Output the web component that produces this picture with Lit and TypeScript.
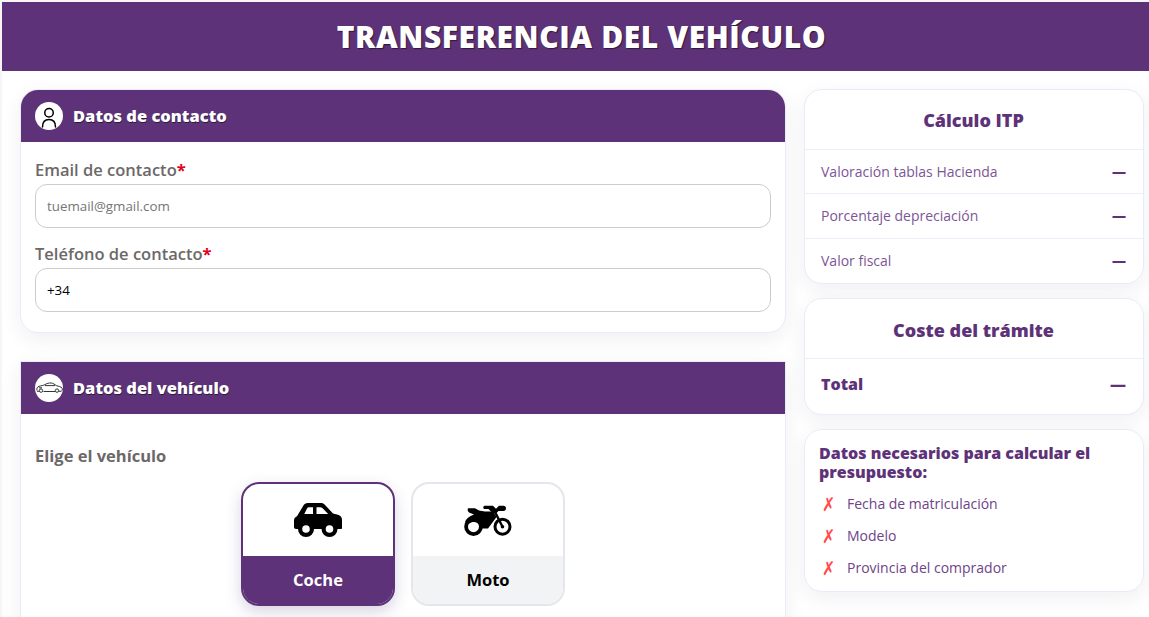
import { LitElement, html, css, svg } from 'lit';
import { customElement } from 'lit/decorators.js';

const personIcon = svg`<svg width="16" height="24" viewBox="0 0 16 24" fill="none" stroke="#000" stroke-width="1.5" stroke-linecap="round">
  <circle cx="8" cy="8.700" r="4.250"></circle>
  <path d="M1.500 23c0-4.800 2.500-7.400 6.500-7.400s6.500 2.600 6.500 7.400"></path>
</svg>`;

const sportsCarIcon = svg`<svg width="27" height="12" viewBox="0 0 27 12" fill="none" stroke="#000" stroke-width="0.8">
  <path d="M1 8.500c-.6-2 .2-3.600 2-4.200 2.500-.7 4.500-.8 6-1.700C10.800 1.400 13 .8 15.200 1c2 .2 3.700 1.700 5.400 2.700 2 .6 4.400 1 5.400 2.300.5 1 .4 2-.2 2.800"></path>
  <path d="M7.500 9.500h11.500M1 9.300h2M23 9.300h2.500M3 5.800h3M9 3.600h10"></path>
  <circle cx="5" cy="8.600" r="1.700"></circle>
  <circle cx="21" cy="8.600" r="1.700"></circle>
</svg>`;

const carIcon = svg`<svg width="48" height="34" viewBox="0 0 48 34">
  <path fill="#000" fill-rule="evenodd" d="M14 0h13c1.500 0 2.800.6 3.800 1.700L39 10.500l5 1.300c2.300.6 4 2.600 4 5v8.200c0 .6-.4 1-1 1H2c-1.100 0-2-.9-2-2v-6.500c0-2 1.200-3.700 3-4.300L9 3.200C10 1.200 11.800 0 14 0zM15 4.200c-.9 0-1.600.4-2 1.200l-2.700 5.600h8.700V4.200h-4zM22.500 4.200V11h11.700l-5.600-5.800c-.7-.7-1.500-1-2.400-1h-3.700z"></path>
  <circle cx="12" cy="26" r="8" fill="#000"></circle>
  <circle cx="12" cy="26" r="3.800" fill="#fff"></circle>
  <circle cx="35.500" cy="26" r="8" fill="#000"></circle>
  <circle cx="35.500" cy="26" r="3.800" fill="#fff"></circle>
</svg>`;

const motoIcon = svg`<svg width="48" height="31" viewBox="0 0 48 31">
  <circle cx="9.500" cy="21.700" r="7.400" fill="none" stroke="#000" stroke-width="3.800"></circle>
  <circle cx="38.500" cy="21.700" r="7.500" fill="none" stroke="#000" stroke-width="3"></circle>
  <circle cx="38.500" cy="21.700" r="1.800" fill="#000"></circle>
  <path fill="#000" d="M4 3.300H11l4 2.200 6 1h8l3.500 5.500L24 23.500h-7.500c-.5-3.500-2.500-6.500-6.500-6.500-2 0-3.500.6-5 1.800L1 17c1-3 4-6 9-7.500L5 7.500C3.800 6.500 3.200 5 4 3.300z"></path>
  <path fill="#000" d="M21 .8h8l3 3 3-3h4.500c1.500 0 2.500 1.100 2.500 2.500S41 6 39.500 6h-5l-2.500 2.500h-3L24.500 4H21c-1 0-1.700-.7-1.700-1.600S20 .8 21 .8z"></path>
  <path fill="none" stroke="#000" stroke-width="2.400" stroke-linecap="round" d="M30 5l8.500 16.700"></path>
</svg>`;

@customElement('app-root')
export class AppRoot extends LitElement {
  static styles = css`
    :host {
      display: block;
      height: 617px;
      overflow: hidden;
      box-sizing: border-box;
      padding: 2px 0 0 2px;
      background: #f6f6f6;
      font-family: 'Open Sans', sans-serif;
    }
    .page {
      background: #fff;
      height: 100%;
    }
    .banner {
      height: 69px;
      display: flex;
      align-items: center;
      justify-content: center;
      padding-left: 12px;
      background: #5e3278;
    }
    .banner h1 {
      margin: 0;
      font-size: 30px;
      font-weight: 800;
      letter-spacing: 0.6px;
      color: #fff;
      text-shadow: 1px 1px 1px #2c1a3a;
    }
    .layout {
      display: grid;
      grid-template-columns: 766px 340px;
      gap: 18px;
      padding: 18px 0 0 18px;
    }
    .main, .side {
      display: flex;
      flex-direction: column;
    }
    .main { gap: 28px; }
    .side { gap: 14px; }
    .card {
      background: #fff;
      border: 1px solid #e9ecf8;
      box-shadow: 0 6px 20px rgba(40, 30, 70, 0.07);
    }
    .form-card { border-radius: 18px; }
    .form-card.square { border-radius: 0; padding-bottom: 40px; }
    .section-head {
      height: 52px;
      display: flex;
      align-items: center;
      gap: 10px;
      padding-left: 14px;
      background: #5e3278;
      color: #fff;
      font-size: 16.5px;
      font-weight: 800;
      text-shadow: 0.5px 0.5px 0 #2c1a3a;
    }
    .section-head span:last-child { margin-top: -2px; }
    .form-card:not(.square) .section-head {
      border-radius: 17px 17px 0 0;
    }
    .round {
      width: 28px;
      height: 28px;
      border-radius: 50%;
      background: #fff;
      display: flex;
      align-items: center;
      justify-content: center;
    }
    .fields {
      display: flex;
      flex-direction: column;
      gap: 14px;
      padding: 16px 14px 20px;
    }
    label, .pick-label {
      display: block;
      font-size: 16.5px;
      font-weight: 600;
      line-height: 24px;
      color: #6c6868;
    }
    label b {
      color: #e2001a;
      font-weight: 700;
    }
    input {
      display: block;
      box-sizing: border-box;
      width: 100%;
      height: 44px;
      margin-top: 2px;
      padding: 0 11px;
      border: 1px solid #ccc;
      border-radius: 12px;
      background: #fff;
      font: 400 13.33px 'Open Sans', sans-serif;
      color: #000;
      outline: none;
    }
    input::placeholder { color: #757575; opacity: 1; }
    .pick {
      padding: 30px 14px 0;
    }
    .pick-label { font-weight: 700; }
    .tiles {
      display: flex;
      justify-content: center;
      gap: 16px;
      margin-top: 14px;
    }
    .tile {
      box-sizing: border-box;
      width: 154px;
      height: 124px;
      display: flex;
      flex-direction: column;
      border: 2px solid #e5e6eb;
      border-radius: 18px;
      overflow: hidden;
      background: #fff;
    }
    .tile .pic {
      flex: 1;
      display: flex;
      align-items: center;
      justify-content: center;
    }
    .tile .name {
      height: 48px;
      box-sizing: border-box;
      padding-bottom: 2px;
      display: flex;
      align-items: center;
      justify-content: center;
      background: #f2f3f5;
      font-size: 16.5px;
      font-weight: 700;
      color: #000;
    }
    .tile.active {
      border-color: #5e3278;
      box-shadow: 0 6px 16px rgba(60, 40, 110, 0.2);
    }
    .tile.active .name {
      background: #5e3278;
      color: #fff;
    }
    .side-card { border-radius: 18px; }
    .side-title {
      height: 59px;
      box-sizing: border-box;
      display: flex;
      align-items: center;
      justify-content: center;
      padding-right: 1px;
      font-size: 18px;
      font-weight: 800;
      color: #5e3278;
    }
    .side-title.low { padding-top: 2px; }
    .row {
      height: 45px;
      display: flex;
      align-items: center;
      justify-content: space-between;
      box-sizing: border-box;
      padding: 0 17px 1px 16px;
      border-top: 1px solid #ecedf9;
      font-size: 14px;
      color: #7d5596;
    }
    .side-title + .row { height: 44px; padding-bottom: 0; }
    .row span:last-child {
      font-size: 14px;
      font-weight: 800;
      color: #5e3278;
    }
    .side-title + .row.total {
      height: 56px;
      padding-bottom: 5px;
      font-size: 16px;
      font-weight: 800;
      color: #5e3278;
    }
    .row.total span:last-child { font-size: 16px; }
    .needs {
      padding: 14px 14px 8px;
    }
    .needs h3 {
      margin: 0 0 5px;
      font-size: 16px;
      line-height: 19px;
      font-weight: 800;
      color: #5e3278;
    }
    .needs ul {
      margin: 0;
      padding: 0;
      list-style: none;
    }
    .needs li {
      height: 32px;
      display: flex;
      align-items: center;
      font-size: 14px;
      color: #6d4489;
    }
    .needs i {
      width: 28px;
      padding-left: 3px;
      box-sizing: border-box;
      font-style: normal;
      font-size: 16px;
      color: #ff4d4d;
      transform: translateY(1px) scaleY(1.2);
    }
  `;

  render() {
    return html`
      <div class="page">
        <div class="banner"><h1>TRANSFERENCIA DEL VEHÍCULO</h1></div>
        <div class="layout">
          <div class="main">
            <section class="card form-card">
              <div class="section-head"><span class="round">${personIcon}</span><span>Datos de contacto</span></div>
              <div class="fields">
                <div>
                  <label>Email de contacto<b>*</b></label>
                  <input type="email" placeholder="tuemail@gmail.com" />
                </div>
                <div>
                  <label>Teléfono de contacto<b>*</b></label>
                  <input type="tel" value="+34" />
                </div>
              </div>
            </section>
            <section class="card form-card square">
              <div class="section-head"><span class="round">${sportsCarIcon}</span><span>Datos del vehículo</span></div>
              <div class="pick">
                <div class="pick-label">Elige el vehículo</div>
                <div class="tiles">
                  <div class="tile active"><div class="pic">${carIcon}</div><div class="name">Coche</div></div>
                  <div class="tile"><div class="pic">${motoIcon}</div><div class="name">Moto</div></div>
                </div>
              </div>
            </section>
          </div>
          <aside class="side">
            <section class="card side-card">
              <div class="side-title">Cálculo ITP</div>
              <div class="row"><span>Valoración tablas Hacienda</span><span>—</span></div>
              <div class="row"><span>Porcentaje depreciación</span><span>—</span></div>
              <div class="row"><span>Valor fiscal</span><span>—</span></div>
            </section>
            <section class="card side-card">
              <div class="side-title low">Coste del trámite</div>
              <div class="row total"><span>Total</span><span>—</span></div>
            </section>
            <section class="card side-card needs">
              <h3>Datos necesarios para calcular el presupuesto:</h3>
              <ul>
                <li><i>✗</i>Fecha de matriculación</li>
                <li><i>✗</i>Modelo</li>
                <li><i>✗</i>Provincia del comprador</li>
              </ul>
            </section>
          </aside>
        </div>
      </div>
    `;
  }
}
